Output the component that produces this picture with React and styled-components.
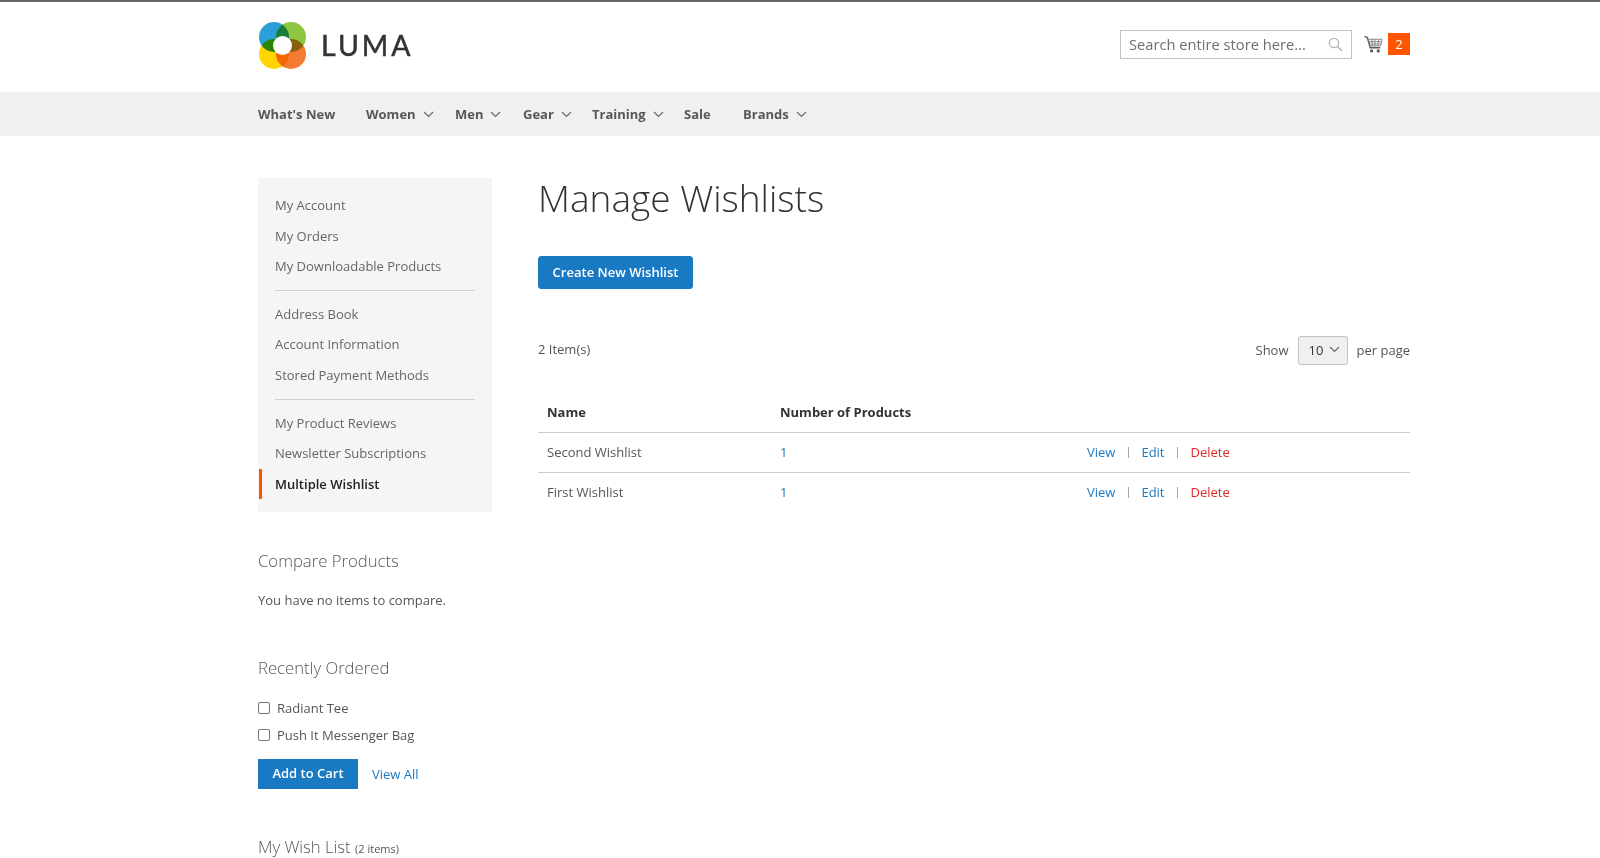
import React from "react";
import styled, { createGlobalStyle } from "styled-components";

const GlobalStyle = createGlobalStyle`
  html, body {
    margin: 0;
    padding: 0;
    height: 858px;
    overflow: hidden;
    background: #fff;
    font-family: "Open Sans", "Liberation Sans", sans-serif;
    font-size: 13px;
    color: #333;
  }
`;

const Wrap = styled.div`
  width: 1152px;
  margin-left: 258px;
`;

const Header = styled.header`
  height: 90px;
  border-top: 2px solid #666;
`;
const HeaderRow = styled(Wrap)`
  display: flex;
  align-items: center;
  height: 84px;
`;
const LogoLink = styled.a`
  display: flex;
  align-items: center;
  gap: 15px;
  margin-top: 2px;
  padding-left: 1px;
`;
const LogoText = styled.span`
  font-family: Lato, "Open Sans", sans-serif;
  font-size: 28.5px;
  font-weight: 400;
  letter-spacing: 3px;
  color: #333;
  -webkit-text-stroke: 0.5px #333;
`;
const Blend = styled.circle`
  mix-blend-mode: multiply;
`;
const SearchBox = styled.div`
  display: flex;
  align-items: center;
  justify-content: space-between;
  box-sizing: border-box;
  width: 232px;
  height: 29px;
  margin-left: auto;
  padding: 0 8px;
  border: 1px solid #c2c2c2;
  font-size: 14.7px;
  color: #6f6f6f;
`;
const Cart = styled.div`
  display: flex;
  align-items: center;
  margin-left: 12px;
  gap: 5px;
`;
const Badge = styled.span`
  display: flex;
  align-items: center;
  justify-content: center;
  width: 22px;
  height: 22px;
  background: #ff5501;
  color: #fff;
  font-size: 13px;
`;

const Nav = styled.nav`
  height: 44px;
  background: #f0f0f0;
`;
const NavRow = styled(Wrap)`
  display: flex;
  align-items: center;
  height: 100%;
`;
const NavItem = styled.a`
  display: flex;
  align-items: center;
  width: ${(props) => props.$w}px;
  font-weight: 700;
  font-size: 13px;
  color: #575757;
  white-space: nowrap;
`;
const Caret = styled.svg`
  margin-left: ${(props) => props.$gap || 7}px;
  flex: none;
`;

const Main = styled(Wrap)`
  display: flex;
  padding-top: 41.5px;
`;
const Side = styled.aside`
  width: 234px;
  flex: none;
`;
const Content = styled.main`
  flex: 1;
  margin-left: 46px;
  padding-top: 0.5px;
`;

const AccountNav = styled.ul`
  list-style: none;
  margin: 0;
  padding: 12.5px 0;
  background: #f5f5f5;
`;
const NavLine = styled.li`
  position: relative;
  height: 30.6px;
  line-height: 30.6px;
  padding-left: 17px;
  color: ${(props) => (props.$active ? "#222" : "#666")};
  font-weight: ${(props) => (props.$active ? 600 : 400)};
  &::before {
    content: "";
    display: ${(props) => (props.$active ? "block" : "none")};
    position: absolute;
    left: 1px;
    top: 0;
    bottom: 0;
    width: 3px;
    background: #ff5501;
  }
`;
const NavSep = styled.li`
  height: 1px;
  margin: 8.5px 17px 7.5px;
  background: #d1d1d1;
`;

const BlockTitle = styled.div`
  margin-top: ${(props) => props.$top}px;
  font-size: 16.7px;
  font-weight: 300;
  line-height: 24px;
  color: #575757;
`;
const Small = styled.span`
  font-size: 11px;
  font-weight: 400;
  color: #575757;
`;
const Para = styled.p`
  margin: 17px 0 0;
  line-height: 20px;
  color: #555;
`;
const CheckRow = styled.label`
  display: flex;
  align-items: center;
  gap: 7px;
  height: 27px;
  color: #555;
`;
const CheckBox = styled.span`
  box-sizing: border-box;
  width: 12px;
  height: 12px;
  border: 1px solid #767676;
  border-radius: 2px;
  background: #fff;
`;
const Checks = styled.div`
  margin-top: 15px;
`;
const Actions = styled.div`
  display: flex;
  align-items: center;
  gap: 14px;
  margin-top: 10px;
`;
const Button = styled.button`
  display: block;
  box-sizing: border-box;
  width: ${(props) => props.$w}px;
  height: ${(props) => props.$h}px;
  margin-top: ${(props) => props.$top || 0}px;
  padding: 0 0 2px;
  border: 1px solid #1979c3;
  border-radius: ${(props) => props.$r || 0}px;
  background: #1979c3;
  color: #fff;
  font-family: inherit;
  font-size: 13px;
  font-weight: 600;
`;
const BlueLink = styled.a`
  color: #1979c3;
`;
const RedLink = styled.a`
  color: #e02b27;
`;

const Title = styled.h1`
  margin: 0;
  font-size: 37px;
  font-weight: 300;
  line-height: 40px;
  color: #333;
`;
const ToolRow = styled.div`
  display: flex;
  align-items: center;
  justify-content: space-between;
  margin-top: 46px;
  height: 29px;
  color: #555;
`;
const ItemCount = styled.span`
  padding-bottom: 2px;
`;
const Pager = styled.div`
  display: flex;
  align-items: center;
`;
const PageSelect = styled.div`
  display: flex;
  align-items: center;
  box-sizing: border-box;
  width: 50px;
  height: 29px;
  margin: 2px 9px 0;
  padding: 0 0 2px 10px;
  border: 1px solid #c2c2c2;
  border-radius: 3px;
  background: #f0f0f0;
  color: #333;
`;
const Table = styled.table`
  width: 100%;
  margin-top: 29px;
  border-collapse: collapse;
  table-layout: fixed;
`;
const Th = styled.th`
  box-sizing: border-box;
  width: ${(props) => (props.$w ? `${props.$w}px` : "auto")};
  height: 39px;
  padding: 0 9px 1px;
  border-bottom: 1px solid #ccc;
  text-align: left;
  font-weight: 700;
  color: #333;
`;
const Td = styled.td`
  box-sizing: border-box;
  height: 40px;
  padding: 0 9px;
  color: ${(props) => (props.$blue ? "#1979c3" : "#555")};
`;
const Row = styled.tr`
  &:not(:last-child) td {
    border-bottom: 1px solid #ccc;
  }
`;
const RowActions = styled.div`
  display: flex;
  align-items: center;
`;
const Pipe = styled.span`
  width: 1px;
  height: 11px;
  margin: 0 12.5px;
  background: #a6a6a6;
`;

const ChevronDown = ({ gap }) => (
  <Caret $gap={gap} width="11" height="7" viewBox="0 0 11 7" fill="none">
    <path d="M1 1l4.5 4.5L10 1" stroke="#666" strokeWidth="1.1" />
  </Caret>
);

const Logo = () => (
  <svg width="47" height="47" viewBox="0 0 47 47">
    <Blend cx="15" cy="15" r="15" fill="#2a9fd8" />
    <Blend cx="32" cy="15" r="15" fill="#8dc63f" />
    <Blend cx="15" cy="32" r="15" fill="#ffd400" />
    <Blend cx="32" cy="32" r="15" fill="#f47b30" />
    <circle cx="23.5" cy="23.5" r="9.5" fill="#fff" />
  </svg>
);

const SearchIcon = () => (
  <svg width="15" height="15" viewBox="0 0 15 15" fill="none">
    <circle cx="6" cy="6" r="4.7" stroke="#b5b5b5" strokeWidth="1.3" />
    <path d="M9.5 9.5l4.5 4.5" stroke="#b5b5b5" strokeWidth="1.6" />
  </svg>
);

const CartIcon = () => (
  <svg width="19" height="19" viewBox="0 0 20 19" fill="none">
    <path d="M0.5 1l3 1.2L6.5 13h10.5" stroke="#5c5c5c" strokeWidth="1.5" />
    <path
      d="M4.5 4h14.5l-1.6 7H6.4zM8 4l1 7M11.5 4v7M15.5 4l-1 7M5 6.5h13.5M5.7 9h12.3"
      stroke="#777"
      strokeWidth="0.9"
    />
    <circle cx="8" cy="16.3" r="1.7" fill="#5c5c5c" />
    <circle cx="15" cy="16.3" r="1.7" fill="#5c5c5c" />
  </svg>
);

const menu = [
  { label: "What's New", w: 108 },
  { label: "Women", w: 89, caret: true },
  { label: "Men", w: 68, caret: true },
  { label: "Gear", w: 69, caret: true },
  { label: "Training", w: 92, caret: true },
  { label: "Sale", w: 59 },
  { label: "Brands", w: 80, caret: true },
];

const accountLinks = [
  ["My Account", "My Orders", "My Downloadable Products"],
  ["Address Book", "Account Information", "Stored Payment Methods"],
  ["My Product Reviews", "Newsletter Subscriptions", "Multiple Wishlist"],
];

const wishlists = [
  { name: "Second Wishlist", count: 1 },
  { name: "First Wishlist", count: 1 },
];

const App = () => (
  <>
    <GlobalStyle />
    <Header>
      <HeaderRow>
        <LogoLink>
          <Logo />
          <LogoText>LUMA</LogoText>
        </LogoLink>
        <SearchBox>
          Search entire store here...
          <SearchIcon />
        </SearchBox>
        <Cart>
          <CartIcon />
          <Badge>2</Badge>
        </Cart>
      </HeaderRow>
    </Header>
    <Nav>
      <NavRow>
        {menu.map((item) => (
          <NavItem key={item.label} $w={item.w}>
            {item.label}
            {item.caret && <ChevronDown />}
          </NavItem>
        ))}
      </NavRow>
    </Nav>
    <Main>
      <Side>
        <AccountNav>
          {accountLinks.map((group, i) => (
            <React.Fragment key={group[0]}>
              {i > 0 && <NavSep />}
              {group.map((label) => (
                <NavLine key={label} $active={label === "Multiple Wishlist"}>
                  {label}
                </NavLine>
              ))}
            </React.Fragment>
          ))}
        </AccountNav>
        <BlockTitle $top={37}>Compare Products</BlockTitle>
        <Para>You have no items to compare.</Para>
        <BlockTitle $top={46}>Recently Ordered</BlockTitle>
        <Checks>
          <CheckRow>
            <CheckBox />
            Radiant Tee
          </CheckRow>
          <CheckRow>
            <CheckBox />
            Push It Messenger Bag
          </CheckRow>
        </Checks>
        <Actions>
          <Button $w={100} $h={30}>Add to Cart</Button>
          <BlueLink>View All</BlueLink>
        </Actions>
        <BlockTitle $top={46}>
          My Wish List <Small>(2 items)</Small>
        </BlockTitle>
      </Side>
      <Content>
        <Title>Manage Wishlists</Title>
        <Button $w={155} $h={33} $r={3} $top={38}>
          Create New Wishlist
        </Button>
        <ToolRow>
          <ItemCount>2 Item(s)</ItemCount>
          <Pager>
            Show
            <PageSelect>
              10
              <ChevronDown gap={6} />
            </PageSelect>
            per page
          </Pager>
        </ToolRow>
        <Table>
          <thead>
            <tr>
              <Th $w={233}>Name</Th>
              <Th $w={307}>Number of Products</Th>
              <Th />
            </tr>
          </thead>
          <tbody>
            {wishlists.map((list) => (
              <Row key={list.name}>
                <Td>{list.name}</Td>
                <Td $blue>{list.count}</Td>
                <Td>
                  <RowActions>
                    <BlueLink>View</BlueLink>
                    <Pipe />
                    <BlueLink>Edit</BlueLink>
                    <Pipe />
                    <RedLink>Delete</RedLink>
                  </RowActions>
                </Td>
              </Row>
            ))}
          </tbody>
        </Table>
      </Content>
    </Main>
  </>
);

export default App;
